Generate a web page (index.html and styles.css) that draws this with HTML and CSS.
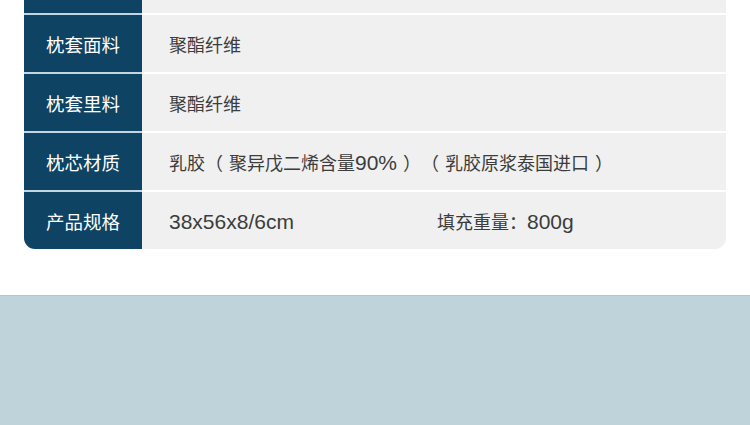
FILE: index.html
```html
<!DOCTYPE html>
<html lang="zh-CN">
<head>
    <meta charset="UTF-8">
    <meta name="viewport" content="width=device-width, initial-scale=1.0">
    <title>产品参数</title>
    <link rel="stylesheet" href="styles.css">
</head>
<body>
    <div class="spec-table">
        <div class="spec-row spec-row-top">
            <div class="spec-label"></div>
            <div class="spec-value"></div>
        </div>
        <div class="spec-row">
            <div class="spec-label">枕套面料</div>
            <div class="spec-value"><span>聚酯纤维</span></div>
        </div>
        <div class="spec-row">
            <div class="spec-label">枕套里料</div>
            <div class="spec-value"><span>聚酯纤维</span></div>
        </div>
        <div class="spec-row">
            <div class="spec-label">枕芯材质</div>
            <div class="spec-value"><span>乳胶<span class="paren paren-open">（</span>聚异戊二烯含量<span class="num">90%</span><span class="paren paren-close">）</span><span class="paren paren-open">（</span>乳胶原浆泰国进口<span class="paren paren-close">）</span></span></div>
        </div>
        <div class="spec-row spec-row-last">
            <div class="spec-label">产品规格</div>
            <div class="spec-value"><span><span class="spec-col num">38x56x8/6cm</span>填充重量：<span class="num">800g</span></span></div>
        </div>
    </div>

    <div class="banner"></div>
</body>
</html>
```

FILE: styles.css
```css
body {
    font-family: "Liberation Sans", "Noto Sans CJK SC", sans-serif;
    background-color: #ffffff;
    margin: 0;
}
.spec-table {
    margin: 0 24px 46px 24px;
}
.spec-row {
    display: grid;
    grid-template-columns: 118px 1fr;
    height: 59px;
}
.spec-label {
    background-color: #0e4364;
    color: #ffffff;
    font-size: 18.5px;
    display: flex;
    align-items: center;
    justify-content: center;
    border-top: 2px solid #c2d5e0;
}
.spec-value {
    background-color: #f0f0f0;
    color: #3c3c3c;
    font-size: 18px;
    display: flex;
    align-items: center;
    padding-left: 27px;
    border-top: 2px solid #ffffff;
    white-space: nowrap;
}
.spec-row-top {
    height: 13px;
}
.spec-row-top .spec-label,
.spec-row-top .spec-value {
    border-top: none;
}
.spec-row-last .spec-label {
    border-bottom-left-radius: 11px;
}
.spec-row-last .spec-value {
    border-bottom-right-radius: 11px;
}
.num {
    font-size: 21px;
}
.paren {
    display: inline-block;
    width: 24px;
}
.paren-open {
    text-align: left;
}
.paren-close {
    text-align: right;
}
.spec-col {
    display: inline-block;
    width: 268px;
}
.banner {
    height: 130px;
    background-color: #bfd3da;
    border-top: 1px solid #b3c9d1;
}
```
